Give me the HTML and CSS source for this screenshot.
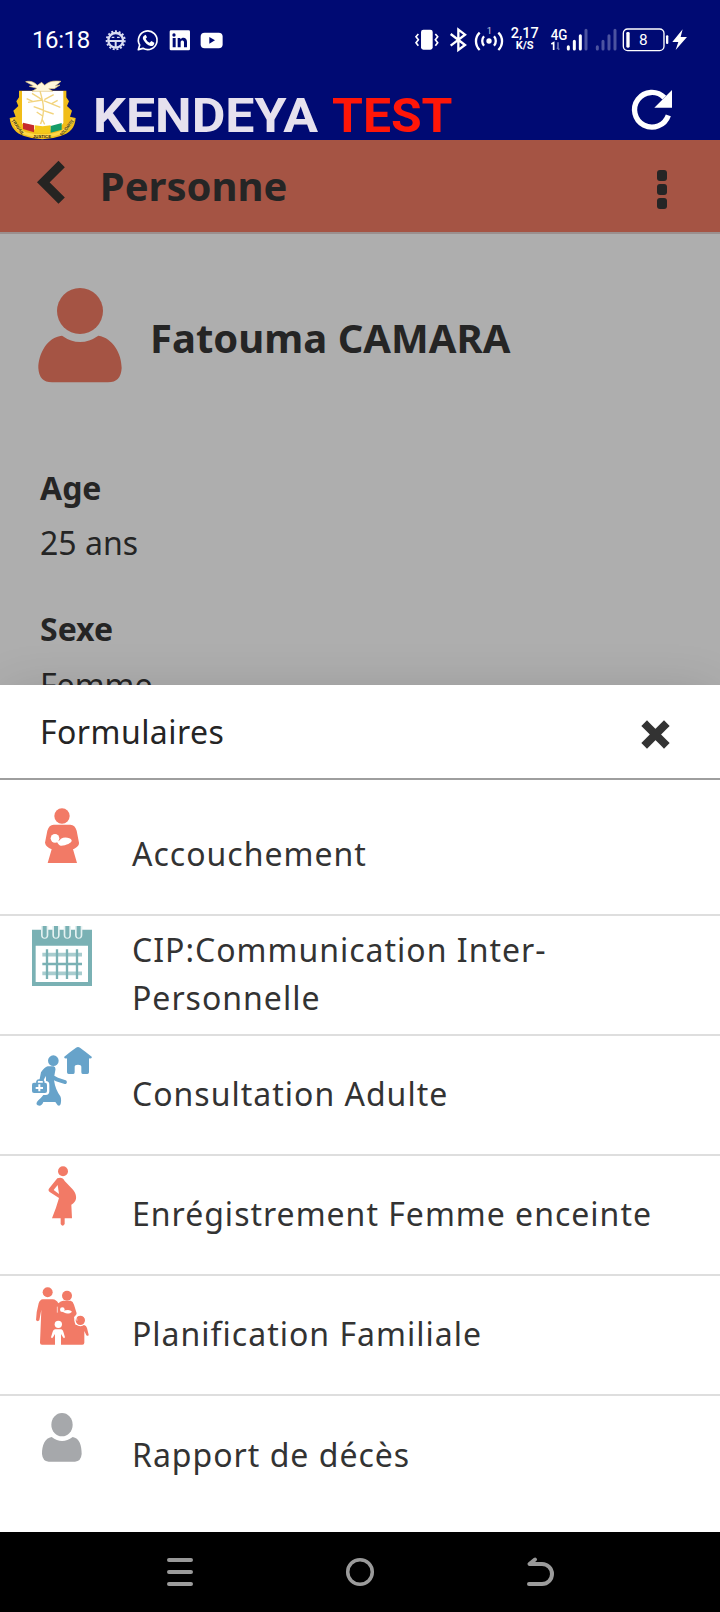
FILE: index.html
```html
<!DOCTYPE html>
<html lang="fr">
<head>
<meta charset="utf-8">
<title>Kendeya</title>
<link rel="stylesheet" href="styles.css">
</head>
<body>
<div class="screen">
  <div class="status">
    <span class="clock">16:18</span>
    <svg class="status-left" viewBox="310 50 370 80" fill="#fff">
      <g stroke="#d9dcf2" fill="none"><circle cx="348" cy="90" r="22" stroke-width="7"/><circle cx="348" cy="90" r="27" stroke-width="6" stroke-dasharray="6 5.3"/><path d="M328 92h40M348 92v20" stroke-width="6"/><path d="M336 81h8M352 81h8" stroke-width="4"/></g>
      <path d="M416 118l4-14a28 28 0 1 1 10 10z" fill="none" stroke="#fff" stroke-width="5" stroke-linejoin="round"/>
      <path d="M433 76c-5 4-4 9-1 14 5 9 12 15 21 17 6 1 11-3 11-10l-9-5-5 5c-6-3-9-6-12-12l4-4-4-8z"/>
      <rect x="510" y="60" width="61" height="60" rx="4"/>
      <g fill="#000a73"><circle cx="523" cy="74" r="5"/><path d="M519 83h9v28h-9zM534 83h8v4c6-8 20-6 20 7v17h-9V96c0-7-10-7-10 0v15h-9z"/></g>
      <rect x="603" y="67" width="66" height="47" rx="12"/><path d="M629 80v20l17-10z" fill="#000a73"/>
    </svg>
    <svg class="status-right" viewBox="40 40 840 100" fill="#fff">
      <rect x="67" y="60" width="35" height="60" rx="7"/>
      <path d="M59 73l-7 8 7 9-7 9 7 9M110 73l7 8-7 9 7 9-7 9" fill="none" stroke="#fff" stroke-width="5"/>
      <path d="M156 73l43 33-20 15V60l20 15-43 33" fill="none" stroke="#fff" stroke-width="7"/>
      <circle cx="271" cy="94" r="8"/>
      <path d="M256 80a21 21 0 0 0 0 28M286 80a21 21 0 0 1 0 28M243 69a36 36 0 0 0 0 52M299 69a36 36 0 0 1 0 52" fill="none" stroke="#fff" stroke-width="7"/>
      <text x="264" y="72" font-size="28" opacity=".75">1</text>
      <text x="336" y="84" font-size="45" font-weight="500" textLength="84" lengthAdjust="spacingAndGlyphs">2,17</text>
      <text x="351" y="117" font-size="33" font-weight="700" textLength="54" lengthAdjust="spacingAndGlyphs">K/S</text>
      <text x="456" y="91" font-size="45" font-weight="500" textLength="50" lengthAdjust="spacingAndGlyphs">4G</text>
      <path d="M458 103l7-4v22" fill="none" stroke="#fff" stroke-width="5"/>
      <path d="M478 98v20M475 114l7 6" stroke="#7077b5" stroke-width="5"/>
      <g stroke="#fff" stroke-width="9" stroke-linecap="round"><path d="M509 111v7M527 95v23M545 78v40"/><path d="M562 62v56M596 111v7M613 95v23M631 78v40M649 62v56" stroke="#4c53a0"/></g>
      <rect x="674" y="58" width="122" height="65" rx="13" fill="none" stroke="#fff" stroke-width="4"/>
      <rect x="683" y="67" width="10" height="47" rx="4"/><rect x="802" y="77" width="7" height="26" rx="3"/>
      <text x="721" y="105" font-size="46">8</text>
      <path d="M852 59l-31 38h18l-8 24 34-39h-19z"/>
    </svg>
  </div>

  <div class="appbar">
    <svg class="emblem" viewBox="28 208 204 180">
      <path d="M58 240h142v20l8 12-6 14 15 14-6 18 17 4c-2 30-18 46-45 54q-55 20-110 0c-24-8-40-25-43-54l18-4-7-18 15-14-6-14 8-12z" fill="#f1bd19"/>
      <path d="M38 325c15 35 32 50 88 50s78-16 94-50" fill="none" stroke="#ffd94a" stroke-width="9"/>
      <path d="M67 241h124v96q-8 17-62 24-55-7-62-24z" fill="#fff"/>
      <path d="M70 336l33 8v21l-33-10z" fill="#c62a2d"/><path d="M105 344q24 5 48 0v21q-24 6-48 0z" fill="#f4c91a"/><path d="M153 346l33-9v20l-33 9z" fill="#159c68"/>
      <path d="M121 241c9 32 17 58 2 99M128 268l-43 7M126 266l-29-18M132 270l50 20M134 267l28-15M130 298l-28-10M130 299l32 11M129 316l-18-12M122 340l6-13 7 14M100 273l-19-9M156 279l18-10" fill="none" stroke="#f2d47e" stroke-width="4"/>
      <path d="M78 213c16-4 28 3 35 11l13-9 9 9c14-13 26-14 49-12l-17 14 14-3-17 11h-17l12 8H97l15-9-23-6 12-2z" fill="#fff7dc" stroke="#dfc47b" stroke-width="2"/>
      <g fill="#2b2412" font-size="13" font-weight="700"><text transform="translate(35 330) rotate(54)">TRAVAIL</text><text x="100" y="383" textLength="54" lengthAdjust="spacingAndGlyphs">JUSTICE</text><text transform="translate(187 376) rotate(-51)" textLength="58" lengthAdjust="spacingAndGlyphs">SOLIDARITE</text></g>
    </svg>
    <svg class="wordmark" viewBox="0 0 370 46">
      <text x="-3" y="39" textLength="225" lengthAdjust="spacingAndGlyphs" fill="#e6e1ee">KENDEYA</text>
      <text x="236" y="39" textLength="120.5" lengthAdjust="spacingAndGlyphs" fill="#ff1608">TEST</text>
    </svg>
    <svg class="refresh" viewBox="216 60 122 122"><path d="M325 136A52 52 0 1 1 313 83" fill="none" stroke="#fff" stroke-width="16"/><path d="M336 60v53h-53z" fill="#fff"/></svg>
  </div>

  <div class="titlebar">
    <svg class="back" viewBox="110 60 86 134"><path d="M184 72l-55 55 55 55" fill="none" stroke="#252422" stroke-width="27"/></svg>
    <h1 class="title">Personne</h1>
    <div class="dots"><i></i><i></i><i></i></div>
  </div>

  <div class="profile">
    <div class="identity">
      <svg class="avatar" viewBox="114 443 252 284" fill="#a55444"><circle cx="240" cy="512" r="69"/><path d="M186 586q54 38 109 0c44 7 70 54 70 97q-2 43-41 43H156q-39 0-41-43c0-43 27-93 71-97z"/></svg>
      <h2 class="name">Fatouma CAMARA</h2>
    </div>
    <dl class="facts"><dt>Age</dt><dd>25 ans</dd><dt>Sexe</dt><dd>Femme</dd></dl>
  </div>

  <div class="sheet">
    <div class="sheet-head">
      <span class="sheet-title">Formulaires</span>
      <svg class="close" viewBox="0 0 27 27"><path d="M5 5l17 17M22 5L5 22" stroke="#333" stroke-width="8" stroke-linecap="square"/></svg>
    </div>
    <div class="row first">
      <svg class="icon coral" viewBox="96 78 180 180"><circle cx="186" cy="108" r="23"/><path d="M161 134h50q14 0 19 18l7 36c0 10-7 14-18 20l12 41h-88l12-41c-12-6-18-10-20-20l7-36q5-18 19-18z"/><g fill="#fff"><circle cx="165" cy="175" r="13"/><path d="M170 184q8 0 13-8c10-6 29-3 32 5 2 8-20 17-33 16q-7-1-12-13z"/></g></svg>
      <span class="label">Accouchement</span>
    </div>
    <div class="row">
      <svg class="icon" viewBox="96 438 180 180"><path d="M96 449h180v169H96z" fill="#7ab1b4"/><path d="M107 497h157v109H107z" fill="#fff"/><g stroke-linecap="round"><path d="M134 434v31M168 434v31M202 434v31M236 434v31" stroke="#e4f1f1" stroke-width="22"/><path d="M134 434v33M168 434v33M202 434v33M236 434v33" stroke="#7ab1b4" stroke-width="12"/></g><path d="M127 524h119M127 580h119" stroke="#a9cdcf" stroke-width="11"/><path d="M127 552h119M141 508v89M171 508v89M201 508v89M231 508v89" stroke="#7ab1b4" stroke-width="7"/></svg>
      <span class="label">CIP:Communication Inter-Personnelle</span>
    </div>
    <div class="row">
      <svg class="icon blue" viewBox="96 78 180 180"><circle cx="160" cy="122" r="16"/><path d="M192 111q20-17 36-28 6-4 12 0 18 13 36 28-2 6-9 4v42q0 5-5 5h-14q-4 0-4-5v-17q0-6-10-6t-10 6v17q0 5-4 5h-14q-5 0-5-5v-42q-7 2-9-4z"/><path d="M142 139h19q7 2 5 12l-3 16 11 6 23 8c6 3 4 12-3 11l-26-8-6-3q4 28 19 48 4 9 1 23-2 7-9 4l-7-10h-36q-6 15-17 10-8-5 2-15 19-16 23-33V175l-1-7-9 19h-11l6-30q10-15 20-18z"/><g><rect x="98" y="187" width="46" height="34" rx="7" fill="#fff" stroke="#fff" stroke-width="8"/><path d="M111 189v-5q1-4 6-4h8q5 0 6 4v5" fill="none" stroke="#67a3ca" stroke-width="5"/><rect x="96" y="188" width="45" height="31" rx="6"/><path d="M118 193v21M107 204h22" stroke="#fff" stroke-width="6"/></g></svg>
      <span class="label">Consultation Adulte</span>
    </div>
    <div class="row">
      <svg class="icon coral" viewBox="96 438 180 180"><circle cx="189" cy="454" r="15"/><path d="M172 475q15-6 22 8l23 24q13 14 11 29-2 11-14 18l2 41h-22v17q-6 10-12 0v-17h-26q13-32 21-61l-28-18q-7-5 0-13z"/><path d="M173 495l-12 15 16 12z" fill="#fff"/></svg>
      <span class="label">Enrégistrement Femme enceinte</span>
    </div>
    <div class="row">
      <svg class="icon coral" viewBox="96 78 180 180"><circle cx="143" cy="97" r="15"/><circle cx="201" cy="107" r="15"/><path d="M128 118h30q11 1 17 12 7-8 15-8h22q7 2 10 12l8 26q0 6-8 11l5 24h25q7 1 9 9l5 20q-1 6-7 2l-6-13v35q0 6-6 6H126q-6 0-6-6l4-99-6 32q-4 5-10 0 1-27 8-51 4-11 12-12z"/><circle cx="241" cy="181" r="16" stroke="#fff" stroke-width="4"/><path d="M172 140v18M228 165l3 17" stroke="#fff" stroke-width="2"/><g fill="#fff"><circle cx="187" cy="149" r="7"/><path d="M188 154q20-8 28 1c-7 8-24 7-28-1z"/><circle cx="175" cy="193" r="11"/><path d="M165 208h19q5 2 6 7l5 17q-3 5-6 0l-6-10v33h-18v-33l-6 10q-3 5-6 0l5-17q2-6 7-7z"/></g></svg>
      <span class="label">Planification Familiale</span>
    </div>
    <div class="row last">
      <svg class="icon gray" viewBox="96 438 180 180"><ellipse cx="186" cy="494" rx="32" ry="35"/><path d="M155 531q31 24 63 0c20 3 27 24 27 51q-2 22-20 23h-79q-18-1-20-23c0-27 9-48 29-51z"/></svg>
      <span class="label">Rapport de décès</span>
    </div>
  </div>

  <div class="navbar">
    <svg viewBox="0 0 28 30"><path d="M3 3h22M3 15h22M3 27h22" stroke-width="4"/></svg>
    <svg viewBox="0 0 28 30"><circle cx="14" cy="15" r="12.3" stroke-width="3.5"/></svg>
    <svg viewBox="0 0 28 30"><path d="M9 2.5L3.5 7H16a10 10 0 0 1 0 20H3" stroke-width="4" stroke-linejoin="round"/></svg>
  </div>
</div>
</body>
</html>
```
FILE: styles.css
```css
* { box-sizing: border-box; margin: 0; padding: 0; }
body { background: #aeaeae; font-family: "Noto Sans", sans-serif; color: #252525; }
svg { display: block; flex: none; overflow: visible; }
.screen { width: 720px; height: 1612px; display: flex; flex-direction: column; overflow: hidden; }

.status { height: 80px; flex: none; background: #000a73; display: flex; align-items: flex-start; padding: 23px 28px 0 32px; font-family: Roboto, sans-serif; color: #fff; }
.clock { width: 71px; font-size: 24px; line-height: 35px; letter-spacing: -.4px; white-space: nowrap; }
.status-left { width: 123.33px; height: 26.67px; margin-top: 3.67px; }
.status-right { width: 280px; height: 33.33px; margin: 0.33px 0 0 auto; }

.appbar { height: 60px; flex: none; background: #000a73; display: flex; padding: 0 47.33px 0 9.33px; }
.emblem { width: 68px; height: 60px; font-family: "Liberation Sans", sans-serif; }
.wordmark { width: 370px; height: 46px; margin: 13px 0 0 18.67px; font: 700 49px Roboto, sans-serif; }
.refresh { width: 40.67px; height: 40.67px; margin: 10px 0 0 auto; }

.titlebar { height: 94px; flex: none; background: #a55444; border-bottom: 2px solid #9b8f8e; display: flex; padding: 0 53px 0 36.67px; }
.back { width: 28.67px; height: 44.67px; margin-top: 20px; }
.title { font-size: 40px; line-height: 60px; margin: 16px 0 0 34.5px; }
.dots { display: flex; flex-direction: column; gap: 3.5px; margin: 30px 0 0 auto; }
.dots i { width: 10.5px; height: 10.5px; border-radius: 3px; background: #252525; }

.profile { height: 451px; flex: none; background: #aeaeae; padding: 53.67px 38px 0; overflow: hidden; }
.identity { display: flex; height: 96px; }
.avatar { width: 84px; height: 94.67px; }
.name { font-size: 40px; line-height: 60px; margin: 20px 0 0 28px; white-space: nowrap; }
.facts { margin: 80px 0 0 2px; font-size: 32px; line-height: 48px; }
.facts dt { font-weight: 700; }
.facts dd { margin: 7px 0 38px; }
.facts dt + dd:last-child { margin-top: 8px; }

.sheet { height: 847px; flex: none; background: #fff; position: relative; box-shadow: 0 4px 50px -6px rgba(0,0,0,.16); }
.sheet-head { height: 95px; border-bottom: 2px solid #9e9e9e; display: flex; justify-content: space-between; padding: 23px 51px 0 40px; }
.sheet-title { font-size: 32px; line-height: 48px; letter-spacing: .45px; }
.close { width: 27px; height: 27px; margin-top: 12.5px; }
.row { height: 120px; border-bottom: 2px solid #dedede; display: flex; align-items: center; padding: 0 40px 2px 32px; }
.first { height: 136px; padding-top: 16px; }
.last { border-bottom: 0; }
.icon { width: 60px; height: 60px; align-self: flex-start; margin: 10px 40px 0 0; overflow: hidden; }
.coral { fill: #f27a66; }
.blue { fill: #67a3ca; }
.gray { fill: #a6a8ab; }
.label { font-size: 32px; line-height: 48px; letter-spacing: 1px; color: #333; }

.navbar { height: 80px; flex: none; background: #000; display: flex; justify-content: center; gap: 152px; padding-top: 25px; }
.navbar svg { width: 28px; height: 30px; fill: none; stroke: #9c9c9c; stroke-linecap: round; }
```
